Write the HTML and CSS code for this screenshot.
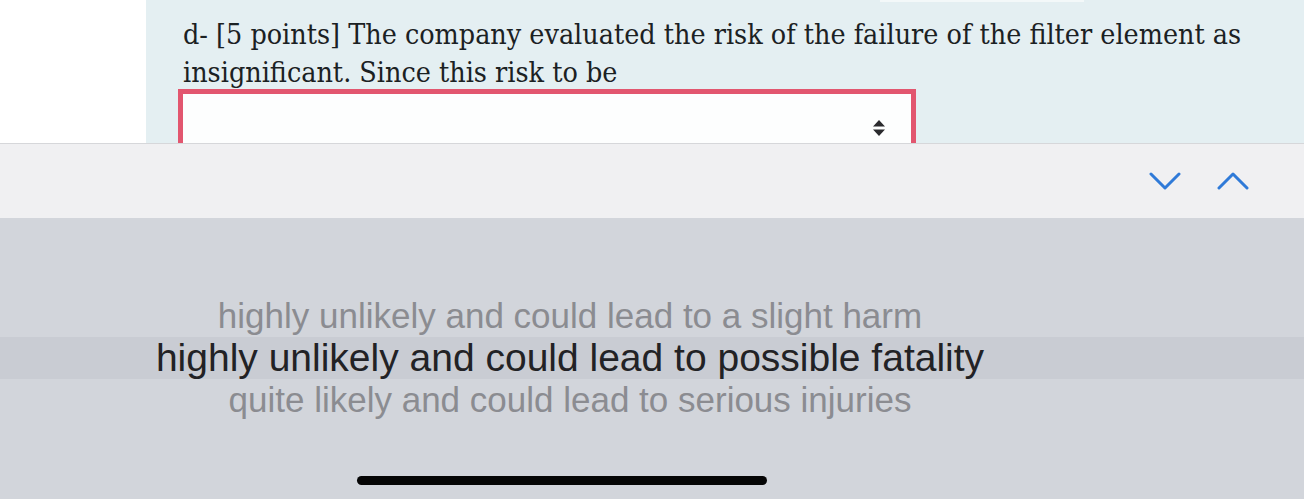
FILE: index.html
```html
<!DOCTYPE html>
<html lang="en">
<head>
<meta charset="utf-8">
<title>Question picker</title>
<link rel="stylesheet" href="styles.css">
</head>
<body>
<div class="page">
  <div class="gutter"></div>
  <div class="panel">
    <div class="topline"></div>
    <p class="question">d- [5 points] The company evaluated the risk of the failure of the filter element as insignificant. Since this risk to be</p>
    <div class="select">
      <svg class="updown" width="14" height="18" viewBox="0 0 14 18"><path d="M7 1 L13 7.5 H1 Z M7 17 L13 10.5 H1 Z" fill="#2b2b2e"/></svg>
    </div>
  </div>
</div>
<div class="toolbar">
  <svg class="chev" width="32" height="22" viewBox="0 0 32 22"><path d="M2 4 L16 18 L30 4" fill="none" stroke="#2f7ad8" stroke-width="3" stroke-linecap="round" stroke-linejoin="round"/></svg>
  <svg class="chev" width="32" height="22" viewBox="0 0 32 22"><path d="M2 18 L16 4 L30 18" fill="none" stroke="#2f7ad8" stroke-width="3" stroke-linecap="round" stroke-linejoin="round"/></svg>
</div>
<div class="picker">
  <div class="options">
    <div class="opt dim">highly unlikely and could lead to a slight harm</div>
    <div class="opt sel">highly unlikely and could lead to possible fatality</div>
    <div class="opt dim">quite likely and could lead to serious injuries</div>
  </div>
  <div class="home"></div>
</div>
</body>
</html>
```
FILE: styles.css
```css
html, body {
  margin: 0;
  padding: 0;
}
body {
  width: 1304px;
  height: 499px;
  overflow: hidden;
  background: #d2d5db;
}
.page {
  display: flex;
  height: 143px;
  background: #ffffff;
}
.gutter {
  width: 146px;
  flex: none;
  background: #ffffff;
}
.panel {
  position: relative;
  flex: 1;
  background: #e4eff2;
  padding: 16px 0 0 32px;
  overflow: hidden;
}
.topline {
  position: absolute;
  top: 0;
  left: 734px;
  width: 204px;
  height: 2px;
  background: #f3f8f9;
}
.question {
  margin: 0;
  width: 1100px;
  font-family: "DejaVu Serif", "Liberation Serif", serif;
  font-stretch: condensed;
  font-size: 28.4px;
  line-height: 38px;
  color: #1b2123;
  padding-left: 5px;
}
.select {
  margin-top: -3px;
  width: 738px;
  height: 80px;
  border: 5px solid #e2566f;
  background: #fdfefe;
  display: flex;
  justify-content: flex-end;
  padding-top: 25px;
  box-sizing: border-box;
}
.updown {
  margin-right: 25px;
}
.toolbar {
  height: 74px;
  border-top: 1px solid #d6d7da;
  background: #f0f0f2;
  display: flex;
  align-items: center;
  justify-content: flex-end;
  gap: 36px;
  padding-right: 55px;
}
.picker {
  height: 281px;
  background: #d2d5db;
  display: flex;
  flex-direction: column;
}
.options {
  margin-top: 77px;
  width: 1140px;
  font-family: "Liberation Sans", Arial, sans-serif;
  text-align: center;
}
.opt {
  height: 42px;
  line-height: 42px;
  white-space: nowrap;
}
.dim {
  font-size: 35px;
  color: #8b8c91;
}
.sel {
  font-size: 39px;
  color: #222225;
  background: #c9ccd3;
  width: 1304px;
  box-sizing: border-box;
  padding-right: 164px;
}
.home {
  margin: 55px 0 0 357px;
  width: 410px;
  height: 9px;
  border-radius: 5px;
  background: #050505;
}
```
